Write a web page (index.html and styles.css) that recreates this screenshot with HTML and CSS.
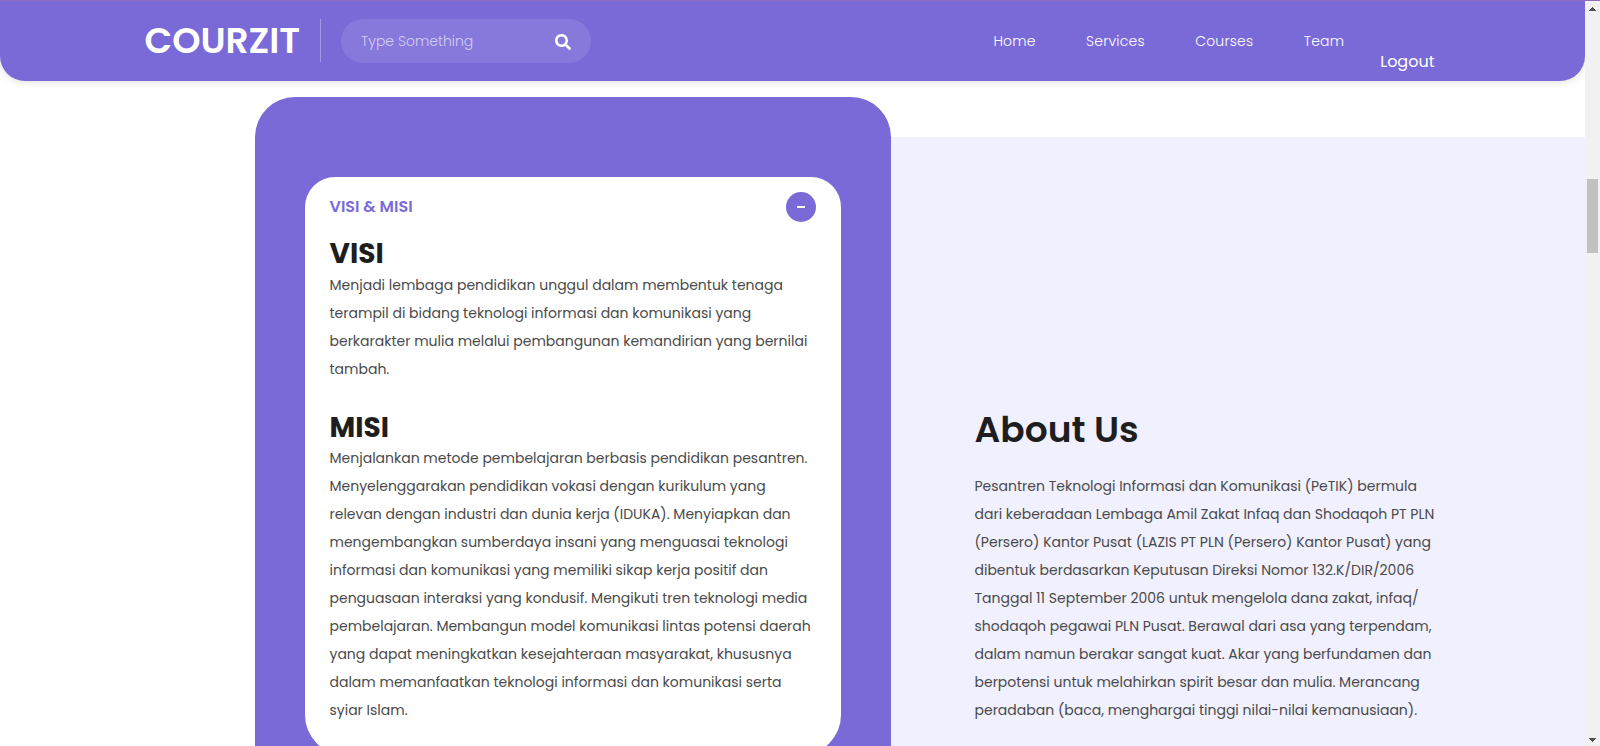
FILE: index.html
```html
<!DOCTYPE html>
<html lang="id">
<head>
    <meta charset="UTF-8">
    <meta name="viewport" content="width=device-width, initial-scale=1.0">
    <title>Courzit</title>
    <link rel="stylesheet" href="styles.css">
</head>
<body>
    <div class="page">
        <!-- Header -->
        <header class="header-area">
            <a href="#" class="logo">COURZIT</a>
            <form class="search-input" action="#">
                <input type="text" placeholder="Type Something">
                <svg class="search-icon" viewBox="0 0 512 512"><path d="M505 442.7L405.3 343c-4.500-4.500-10.600-7-17-7H372c27.600-35.300 44-79.700 44-128C416 93.100 322.900 0 208 0S0 93.100 0 208s93.100 208 208 208c48.300 0 92.700-16.400 128-44v16.300c0 6.400 2.500 12.500 7 17l99.700 99.700c9.400 9.400 24.600 9.400 33.900 0l28.300-28.300c9.400-9.400 9.400-24.600.1-34zM208 336c-70.700 0-128-57.200-128-128 0-70.700 57.200-128 128-128 70.700 0 128 57.200 128 128 0 70.700-57.200 128-128 128z"/></svg>
            </form>
            <ul class="nav">
                <li><a href="#">Home</a></li>
                <li><a href="#">Services</a></li>
                <li><a href="#">Courses</a></li>
                <li><a href="#">Team</a></li>
            </ul>
            <a href="#" class="logout">Logout</a>
        </header>

        <!-- About -->
        <section class="about-us">
            <div class="accordion">
                <div class="accordion-item">
                    <h2 class="accordion-header">VISI &amp; MISI <span class="toggle"></span></h2>
                    <div class="accordion-body">
                        <h3>VISI</h3>
                        <p>
                            Menjadi lembaga pendidikan unggul dalam membentuk tenaga<br>
                            terampil di bidang teknologi informasi dan komunikasi yang<br>
                            berkarakter mulia melalui pembangunan kemandirian yang bernilai<br>
                            tambah.
                        </p>
                        <h3>MISI</h3>
                        <p>
                            Menjalankan metode pembelajaran berbasis pendidikan pesantren.<br>
                            Menyelenggarakan pendidikan vokasi dengan kurikulum yang<br>
                            relevan dengan industri dan dunia kerja (IDUKA). Menyiapkan dan<br>
                            mengembangkan sumberdaya insani yang menguasai teknologi<br>
                            informasi dan komunikasi yang memiliki sikap kerja positif dan<br>
                            penguasaan interaksi yang kondusif. Mengikuti tren teknologi media<br>
                            pembelajaran. Membangun model komunikasi lintas potensi daerah<br>
                            yang dapat meningkatkan kesejahteraan masyarakat, khususnya<br>
                            dalam memanfaatkan teknologi informasi dan komunikasi serta<br>
                            syiar Islam.
                        </p>
                    </div>
                </div>
            </div>
            <div class="section-heading">
                <h2>About Us</h2>
                <p>
                    Pesantren Teknologi Informasi dan Komunikasi (PeTIK) bermula<br>
                    dari keberadaan Lembaga Amil Zakat Infaq dan Shodaqoh PT PLN<br>
                    (Persero) Kantor Pusat (LAZIS PT PLN (Persero) Kantor Pusat) yang<br>
                    dibentuk berdasarkan Keputusan Direksi Nomor 132.K/DIR/2006<br>
                    Tanggal 11 September 2006 untuk mengelola dana zakat, infaq/<br>
                    shodaqoh pegawai PLN Pusat. Berawal dari asa yang terpendam,<br>
                    dalam namun berakar sangat kuat. Akar yang berfundamen dan<br>
                    berpotensi untuk melahirkan spirit besar dan mulia. Merancang<br>
                    peradaban (baca, menghargai tinggi nilai-nilai kemanusiaan).
                </p>
            </div>
        </section>
    </div>

    <div class="scrollbar">
        <svg class="arrow" viewBox="0 0 7 4"><path d="M3 0h1v1h1v1h1v1h1v1H0V3h1V2h1V1h1z"/></svg>
        <div class="thumb"></div>
        <svg class="arrow arrow-down" viewBox="0 0 7 4"><path d="M0 0h7v1H6v1H5v1H4v1H3V3H2V2H1V1H0z"/></svg>
    </div>
</body>
</html>
```

FILE: styles.css
```css
* {
    margin: 0;
    padding: 0;
    box-sizing: border-box;
}
body {
    display: flex;
    height: 746px;
    overflow: hidden;
    border-top: 1px solid #9069b8;
    font-family: "Poppins", "Inter", sans-serif;
    font-size: 14px;
    color: #4a4a4a;
    background-color: #ffffff;
}
a {
    color: #ffffff;
    text-decoration: none;
}
.page {
    flex: 1;
    overflow: hidden;
}

/* header */
.header-area {
    position: relative;
    z-index: 2;
    display: flex;
    height: 80px;
    padding: 18px 150.5px 0 144.5px;
    background-color: #7a6ad8;
    border-radius: 0 0 25px 25px;
    box-shadow: 0 0 10px rgba(0, 0, 0, 0.15);
}
.logo {
    width: 176px;
    height: 43px;
    border-right: 1px solid rgba(255, 255, 255, 0.3);
    font-size: 36px;
    font-weight: 600;
    line-height: 43px;
}
.search-input {
    display: flex;
    align-items: center;
    justify-content: space-between;
    width: 250px;
    height: 44px;
    margin-left: 20px;
    padding: 0 20px 0 20.5px;
    border-radius: 22px;
    background-color: rgba(255, 255, 255, 0.1);
}
.search-input input {
    width: 150px;
    border: none;
    outline: none;
    background: transparent;
    font-family: inherit;
    font-size: 14px;
    font-weight: 300;
    color: #ffffff;
}
.search-input input::placeholder {
    color: rgba(255, 255, 255, 0.65);
}
.search-icon {
    width: 16px;
    height: 16px;
    margin-top: 2px;
    fill: #ffffff;
}
.nav {
    display: flex;
    gap: 50.4px;
    margin-left: auto;
    margin-right: 36px;
    list-style: none;
    font-weight: 300;
    line-height: 44px;
}
.nav a {
    letter-spacing: 0.2px;
}
.logout {
    padding-top: 31px;
    font-size: 16px;
    line-height: 24px;
}

/* about */
.about-us {
    display: flex;
    height: 665px;
    padding: 16px 0 0 254.5px;
    background: linear-gradient(#f1f0fe, #f1f0fe) 891px 56px no-repeat;
}
.accordion {
    width: 636px;
    padding: 80px 50px 0;
    border-radius: 40px 40px 0 0;
    background-color: #7a6ad8;
}
.accordion-item {
    height: 578px;
    padding: 0 25px;
    border-radius: 30px 30px 40px 40px;
    background-color: #ffffff;
}
.accordion-header {
    display: flex;
    justify-content: space-between;
    height: 60px;
    font-size: 16px;
    font-weight: 600;
    line-height: 60px;
    color: #7a6ad8;
}
.toggle {
    display: flex;
    align-items: center;
    justify-content: center;
    width: 30px;
    height: 30px;
    margin-top: 15px;
    border-radius: 50%;
    background-color: #7a6ad8;
}
.toggle::before {
    content: "";
    width: 8px;
    height: 2px;
    background-color: #ffffff;
}
.accordion-body h3 {
    font-size: 28px;
    font-weight: 700;
    line-height: 1.2;
    color: #1e1e1e;
}
p {
    line-height: 28px;
    white-space: nowrap;
}
.accordion-body p {
    margin-bottom: 28px;
}
.section-heading {
    padding: 311px 0 0 84px;
}
.section-heading h2 {
    margin-bottom: 21px;
    font-size: 36px;
    font-weight: 600;
    line-height: 43px;
    color: #1e1e1e;
}

/* scrollbar */
.scrollbar {
    display: flex;
    flex-direction: column;
    align-items: center;
    width: 15px;
    padding: 6px 0 4px;
    background-color: #f1f1f1;
}
.arrow {
    width: 7px;
    height: 4px;
    fill: #505050;
}
.arrow-down {
    margin-top: auto;
}
.thumb {
    width: 11px;
    height: 74px;
    margin-top: 168px;
    background-color: #c1c1c1;
}
```
